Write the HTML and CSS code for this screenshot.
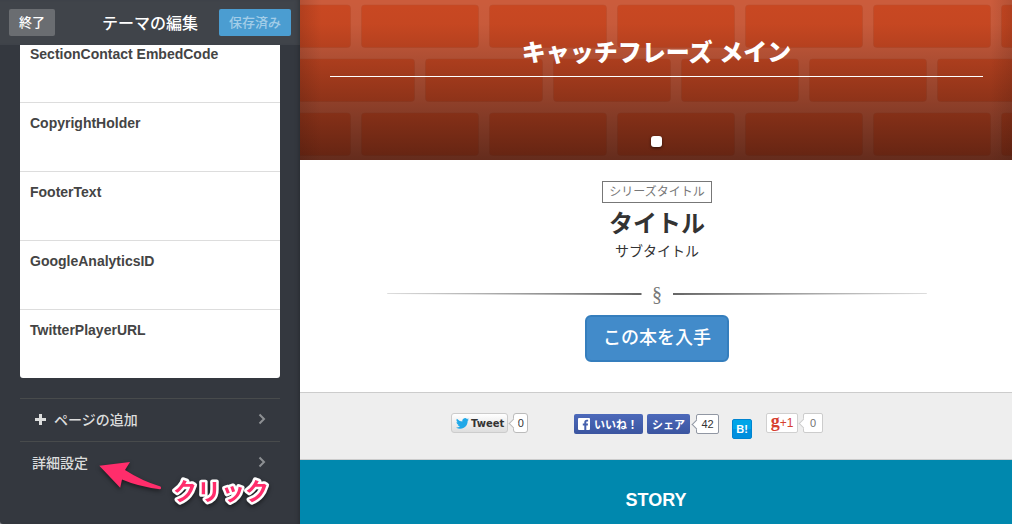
FILE: index.html
```html
<!DOCTYPE html>
<html lang="ja">
<head>
<meta charset="utf-8">
<meta name="viewport" content="width=device-width, initial-scale=1">
<title>テーマの編集</title>
<link rel="stylesheet" href="styles.css">
</head>
<body>
<div class="app">
  <aside class="sidebar">
    <header class="toolbar">
      <button class="tool-btn" type="button">終了</button>
      <h1 class="toolbar-title">テーマの編集</h1>
      <button class="tool-btn tool-btn-saved" type="button">保存済み</button>
    </header>
    <div class="fields">
      <label class="field">SectionContact EmbedCode<input class="field-input" type="text"></label>
      <label class="field">CopyrightHolder<input class="field-input" type="text"></label>
      <label class="field">FooterText<input class="field-input" type="text"></label>
      <label class="field">GoogleAnalyticsID<input class="field-input" type="text"></label>
      <label class="field">TwitterPlayerURL<input class="field-input" type="text"></label>
    </div>
    <nav class="links">
      <a class="link link-add" href="#add">
        <svg class="plus" viewBox="0 0 11 11"><path d="M4 0h3v4h4v3H7v4H4V7H0V4h4z" fill="#dcdddd"/></svg>
        <span>ページの追加</span>
        <svg class="chevron" viewBox="0 0 8 12"><path d="M1.500 1.500 6 6l-4.500 4.500" fill="none" stroke="#8d9093" stroke-width="2"/></svg>
      </a>
      <a class="link" href="#advanced">
        <span>詳細設定</span>
        <svg class="chevron" viewBox="0 0 8 12"><path d="M1.500 1.500 6 6l-4.500 4.500" fill="none" stroke="#8d9093" stroke-width="2"/></svg>
      </a>
      <svg class="callout" viewBox="0 0 190 60">
        <path d="M7.300 9.700 38 6l-5 8Q50 25 68.500 30.500q1.500 2-.5 2.700Q46 30.500 30 23.500l-1.800 8.300z" fill="#ff2d6b"/>
        <text class="callout-text" x="81" y="44">クリック</text>
      </svg>
    </nav>
  </aside>

  <main class="preview">
    <section class="hero">
      <svg class="bricks" aria-hidden="true">
        <defs>
          <pattern id="brick" width="128" height="108" patternUnits="userSpaceOnUse">
            <g fill="#c94822" stroke="#b94b2b" stroke-opacity=".5">
              <rect x="61.500" y="5" width="117" height="42.500" rx="3"/>
              <rect x="-66.500" y="5" width="117" height="42.500" rx="3"/>
              <rect x="-2.500" y="59" width="117" height="42.500" rx="3"/>
              <rect x="125.500" y="59" width="117" height="42.500" rx="3"/>
            </g>
          </pattern>
          <linearGradient id="shade" x2="0" y2="1">
            <stop offset="0" stop-color="#200c08" stop-opacity="0"/>
            <stop offset=".15" stop-color="#200c08" stop-opacity=".02"/>
            <stop offset=".5" stop-color="#200c08" stop-opacity=".26"/>
            <stop offset="1" stop-color="#200c08" stop-opacity=".6"/>
          </linearGradient>
          <linearGradient id="edges">
            <stop offset="0" stop-color="#301008" stop-opacity=".15"/>
            <stop offset=".03" stop-color="#301008" stop-opacity="0"/>
            <stop offset=".97" stop-color="#301008" stop-opacity="0"/>
            <stop offset="1" stop-color="#301008" stop-opacity=".15"/>
          </linearGradient>
        </defs>
        <rect width="100%" height="100%" fill="#cb5c3c"/>
        <rect width="100%" height="100%" fill="url(#brick)"/>
        <rect width="100%" height="100%" fill="url(#shade)"/>
        <rect width="100%" height="100%" fill="url(#edges)"/>
      </svg>
      <h2 class="hero-title">キャッチフレーズ メイン</h2>
      <button class="hero-dot" type="button" aria-label="1"></button>
    </section>

    <section class="book">
      <p class="series">シリーズタイトル</p>
      <h2 class="book-title">タイトル</h2>
      <p class="subtitle">サブタイトル</p>
      <div class="divider">
        <span class="rule rule-left"></span>
        <span class="section-sign">§</span>
        <span class="rule rule-right"></span>
      </div>
      <a class="get-btn" href="#get">この本を入手</a>
    </section>

    <section class="share">
      <div class="share-row">
        <div class="widget widget-tweet">
          <a class="tweet" href="#tweet">
            <svg class="bird" viewBox="0 0 24 20"><path fill="#20a8e8" d="M24 2.400a10 10 0 0 1-2.800.8A5 5 0 0 0 23.300.500a10 10 0 0 1-3.100 1.200A4.900 4.900 0 0 0 11.800 6.200 14 14 0 0 1 1.700 1a4.900 4.900 0 0 0 1.500 6.600A5 5 0 0 1 1 7c0 2.400 1.600 4.400 3.900 4.900a5 5 0 0 1-2.200.1 4.900 4.900 0 0 0 4.600 3.400A9.900 9.900 0 0 1 0 17.400 14 14 0 0 0 21.500 5 10 10 0 0 0 24 2.400z"/></svg>
            <span>Tweet</span>
          </a>
          <span class="count count-tweet">0</span>
        </div>
        <div class="widget widget-fb">
          <button class="fb-btn fb-like" type="button">
            <svg class="fb-logo" viewBox="0 0 12 12"><rect width="12" height="12" rx="1" fill="#fff"/><path fill="#4560ad" d="M6.300 12V7.400H4.800V5.600h1.500V4.300C6.300 2.700 7.200 1.800 8.800 1.800h1.300v1.700H9.200c-.7 0-.9.300-.9.900v1.200H10L9.800 7.400H8.300V12z"/></svg>
            <span>いいね！</span>
          </button>
          <button class="fb-btn" type="button">シェア</button>
          <span class="count count-fb">42</span>
        </div>
        <a class="hatena" href="#hatena">B!</a>
        <div class="widget">
          <button class="gplus" type="button"><span class="gplus-g">g</span><span>+1</span></button>
          <span class="count count-gplus">0</span>
        </div>
      </div>
    </section>

    <section class="story">
      <h2 class="story-title">STORY</h2>
    </section>
  </main>
</div>
</body>
</html>
```

FILE: styles.css
```css
* {
  box-sizing: border-box;
}

body {
  margin: 0;
  background: #8a8c8f;
  color: #333;
  font-family: "Liberation Sans", "Noto Sans CJK JP", sans-serif;
}

h1, h2, p {
  margin: 0;
}

button {
  margin: 0;
  border: 0;
  font-family: inherit;
}

a {
  color: inherit;
  text-decoration: none;
}

.app {
  display: grid;
  grid-template-columns: 300px 1fr;
  min-height: 100vh;
}

/* Sidebar */

.sidebar {
  background: #34383f;
  border-bottom-left-radius: 3px;
  box-shadow: inset -4px 0 4px -3px #282b30;
}

.toolbar {
  position: relative;
  display: flex;
  align-items: center;
  justify-content: space-between;
  height: 45px;
  padding: 0 9px;
  background: #40444a;
  box-shadow: inset -4px 0 4px -3px #303338;
}

.tool-btn {
  height: 27px;
  padding: 0 10px;
  border-radius: 2px;
  background: #6a6d71;
  color: #fff;
  font-size: 13px;
  font-weight: 500;
  line-height: 25px;
}

.tool-btn-saved {
  background: #4b9dd1;
  color: #a3cde8;
}

.toolbar-title {
  padding: 0 0 2px 26px;
  color: #fff;
  font-size: 16px;
  font-weight: 500;
}

.fields {
  margin: -12px 20px 0;
  border-radius: 0 0 3px 3px;
  background: #fff;
  overflow: hidden;
}

.field {
  display: block;
  height: 69px;
  padding: 12px 10px 0;
  color: #444;
  font-size: 14px;
  font-weight: 700;
  line-height: 18px;
}

.field + .field {
  padding-top: 11px;
  border-top: 1px solid #ddd;
}

.field-input {
  display: block;
  width: 100%;
  height: 30px;
  border: 0;
  background: transparent;
  font: inherit;
}

.links {
  position: relative;
  margin: 20px 20px 0;
}

.link {
  display: flex;
  align-items: center;
  height: 43px;
  padding: 0 14px 2px 12px;
  border-top: 1px solid #484b4c;
  color: #dcdddd;
  font-size: 14px;
  font-weight: 500;
}

.link-add {
  padding-left: 15px;
}

.plus {
  width: 11px;
  height: 11px;
  margin-right: 8px;
}

.chevron {
  width: 8px;
  height: 12px;
  margin-left: auto;
}

.callout {
  position: absolute;
  top: 58px;
  left: 72px;
  width: 190px;
  height: 60px;
  filter: drop-shadow(0 2px 2px rgba(0, 0, 0, .5));
}

.callout-text {
  fill: #ff2d6b;
  stroke: #fff;
  stroke-width: 5px;
  stroke-linejoin: round;
  paint-order: stroke;
  font-size: 24px;
  font-weight: 700;
}

/* Preview */

.preview {
  display: flex;
  flex-direction: column;
  background: #fff;
}

.hero {
  position: relative;
  display: flex;
  flex-direction: column;
  align-items: center;
  height: 160px;
  padding: 35px 29px 13px 30px;
}

.bricks {
  position: absolute;
  inset: 0;
  width: 100%;
  height: 100%;
}

.hero-title {
  position: relative;
  width: 100%;
  padding-bottom: 6px;
  border-bottom: 1px solid #fff;
  color: #fff;
  font-size: 24px;
  font-weight: 900;
  line-height: 35px;
  text-align: center;
}

.hero-dot {
  position: relative;
  width: 11px;
  height: 11px;
  margin-top: auto;
  padding: 0;
  border-radius: 3px;
  background: #fff;
  box-shadow: 0 1px 3px rgba(0, 0, 0, .6);
}

.book {
  display: flex;
  flex-direction: column;
  align-items: center;
  padding: 21px 0 30px 2px;
}

.series {
  padding: 0 6px;
  border: 1px solid #777;
  color: #777;
  font-size: 12px;
  line-height: 20px;
}

.book-title {
  padding-top: 2px;
  font-size: 24px;
  line-height: 38px;
}

.subtitle {
  font-size: 14px;
  line-height: 16px;
}

.divider {
  display: grid;
  grid-template-columns: 1fr 31px 1fr;
  align-items: center;
  width: 76%;
  height: 30px;
  margin: 20px 0 6px;
}

.rule {
  height: 2px;
}

.rule-left {
  background: linear-gradient(to right, #ddd, #666);
  clip-path: polygon(0 0, 100% 0, 100% 100%, 0 50%);
}

.rule-right {
  background: linear-gradient(to left, #ddd, #666);
  clip-path: polygon(0 0, 100% 0, 100% 50%, 0 100%);
}

.section-sign {
  color: #777;
  font-family: "Liberation Serif", serif;
  font-size: 20px;
  line-height: 20px;
  text-align: center;
}

.get-btn {
  padding: 0 16px;
  border: 2px solid #357ebd;
  border-radius: 6px;
  background: #428bca;
  color: #fff;
  font-size: 18px;
  font-weight: 500;
  line-height: 43px;
}

/* Share bar */

.share {
  height: 68px;
  padding-top: 20px;
  border-top: 1px solid #ccc;
  border-bottom: 1px solid #ccc;
  background: #eee;
}

.share-row {
  display: flex;
  align-items: flex-start;
  width: 410px;
  margin: 0 auto;
}

.widget {
  display: flex;
}

.widget-tweet {
  width: 123px;
}

.widget-fb {
  gap: 4px;
  margin: 1px 13px 0 0;
}

.tweet {
  display: flex;
  align-items: center;
  gap: 2px;
  height: 20px;
  padding: 0 3px 0 4px;
  border: 1px solid #ccc;
  border-radius: 3px;
  background: linear-gradient(#fff, #dedede);
  color: #333;
  font-family: "DejaVu Sans", sans-serif;
  font-size: 10px;
  font-weight: 700;
}

.bird {
  width: 13px;
  height: 11px;
}

.count {
  position: relative;
  height: 20px;
  margin-left: 5px;
  border: 1px solid #bbb;
  border-radius: 2px;
  background: #fff;
  color: #333;
  font-size: 11px;
  line-height: 18px;
  text-align: center;
}

.count::before {
  content: "";
  position: absolute;
  top: 6px;
  left: -4px;
  width: 6px;
  height: 6px;
  border: solid #bbb;
  border-width: 0 0 1px 1px;
  background: #fff;
  transform: rotate(45deg);
}

.count-tweet {
  width: 15px;
  border-radius: 3px;
}

.count-fb {
  width: 23px;
  margin-left: 2px;
}

.count-fb,
.count-fb::before {
  border-color: #9197a3;
}

.count-gplus {
  width: 20px;
  color: #737373;
}

.count-gplus,
.count-gplus::before {
  border-color: #ccc;
}

.fb-btn {
  display: flex;
  align-items: center;
  height: 20px;
  padding: 0 5px;
  border-radius: 2px;
  background: linear-gradient(#4c69ba, #3b55a0);
  color: #fff;
  font-size: 11px;
  font-weight: 700;
}

.fb-like {
  gap: 4px;
  width: 69px;
  padding: 0 4px;
}

.fb-like span {
  white-space: nowrap;
}

.fb-logo {
  flex: none;
  width: 12px;
  height: 12px;
}

.hatena {
  width: 20px;
  height: 20px;
  margin: 6px 14px 0 0;
  border: 1px solid #0084d0;
  border-radius: 2px;
  background: linear-gradient(#00a5e8 50%, #008fde 50%);
  color: #fff;
  font-size: 11px;
  font-weight: 700;
  line-height: 18px;
  text-align: center;
}

.gplus {
  display: flex;
  align-items: center;
  justify-content: center;
  width: 32px;
  height: 20px;
  padding: 0;
  border: 1px solid #d0d0d0;
  border-radius: 2px;
  background: #fff;
  color: #d6402f;
  font-size: 12px;
}

.gplus-g {
  padding-bottom: 4px;
  font-family: "Liberation Serif", serif;
  font-size: 18px;
  font-weight: 700;
  line-height: 12px;
}

/* Story */

.story {
  flex: 1;
  padding-top: 29px;
  background: #0088ae;
  color: #fff;
  text-align: center;
}

.story-title {
  font-size: 18px;
  line-height: 22px;
}
```
